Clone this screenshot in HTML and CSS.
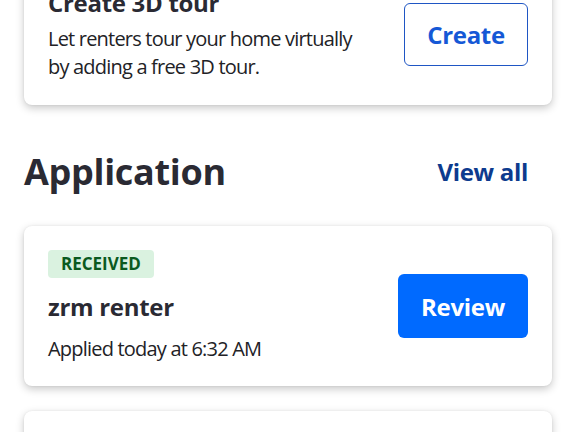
FILE: index.html
```html
<!DOCTYPE html>
<html lang="en">
<head>
<meta charset="utf-8">
<title>Listing</title>
<link rel="stylesheet" href="styles.css">
</head>
<body>
<main class="page">
  <section class="card card-tour">
    <div class="card-text">
      <h3 class="card-title">Create 3D tour</h3>
      <p class="card-desc">Let renters tour your home virtually by adding a free 3D tour.</p>
    </div>
    <button class="btn btn-outline">Create</button>
  </section>

  <div class="section-head">
    <h2 class="section-title">Application</h2>
    <a class="view-all" href="#">View all</a>
  </div>

  <section class="card card-app">
    <div class="card-text">
      <span class="badge">RECEIVED</span>
      <h3 class="app-name">zrm renter</h3>
      <p class="app-meta">Applied today at 6:32 AM</p>
    </div>
    <button class="btn btn-primary">Review</button>
  </section>

  <section class="card card-next"></section>
</main>
</body>
</html>
```

FILE: styles.css
```css
* { box-sizing: border-box; }
html, body { margin: 0; padding: 0; background: #fff; }
body {
  font-family: "Open Sans", "Noto Sans", sans-serif;
  color: #2a2a33;
  overflow: hidden;
  height: 432px;
}
.page {
  padding: 0 24px;
}
.card {
  background: #fff;
  border-radius: 8px;
  box-shadow: 0 3px 8px rgba(0,0,0,0.22), 0 0 2px rgba(0,0,0,0.08);
  display: flex;
  align-items: center;
  justify-content: space-between;
  padding: 24px;
}
.card-tour {
  margin-top: -36px;
  height: 141px;
}
.card-title {
  margin: 0 0 7px;
  font-size: 24px;
  line-height: 30px;
  font-weight: 700;
  letter-spacing: -0.3px;
}
.card-desc, .app-meta {
  letter-spacing: -0.8px;
  color: #222226;
}
.card-desc {
  margin: 0;
  font-size: 20px;
  line-height: 28px;
  width: 320px;
}
.btn {
  font-family: inherit;
  font-weight: 700;
  font-size: 24px;
  border-radius: 6px;
  cursor: pointer;
  letter-spacing: -0.3px;
}
.btn-outline {
  width: 124px;
  height: 63px;
  background: #fff;
  color: #1558d6;
  border: 1.5px solid #1f56c4;
}
.btn-primary {
  width: 130px;
  height: 64px;
  background: #006aff;
  color: #fff;
  border: none;
}
.section-head {
  display: flex;
  align-items: center;
  justify-content: space-between;
  margin: 45px 0 32px;
  padding-right: 24px;
  height: 44px;
}
.section-title {
  margin: 0;
  font-size: 36px;
  line-height: 44px;
  font-weight: 700;
  letter-spacing: -0.3px;
}
.view-all {
  font-size: 24px;
  font-weight: 700;
  color: #0d3b8e;
  text-decoration: none;
  line-height: 32px;
  letter-spacing: -0.3px;
}
.card-app {
  height: 160px;
}
.card-app .card-text {
  display: flex;
  flex-direction: column;
  align-items: flex-start;
}
.badge {
  display: inline-block;
  height: 28px;
  line-height: 28px;
  padding: 0 13px;
  border-radius: 4px;
  background: #daf2e0;
  color: #0b5a1f;
  font-size: 17px;
  font-weight: 700;
}
.app-name {
  margin: 13px 0 0;
  font-size: 24px;
  line-height: 32px;
  font-weight: 700;
  letter-spacing: -0.3px;
}
.app-meta {
  margin: 12px 0 0;
  font-size: 20px;
  line-height: 28px;
}
.card-next {
  margin-top: 25px;
  height: 100px;
}
```
